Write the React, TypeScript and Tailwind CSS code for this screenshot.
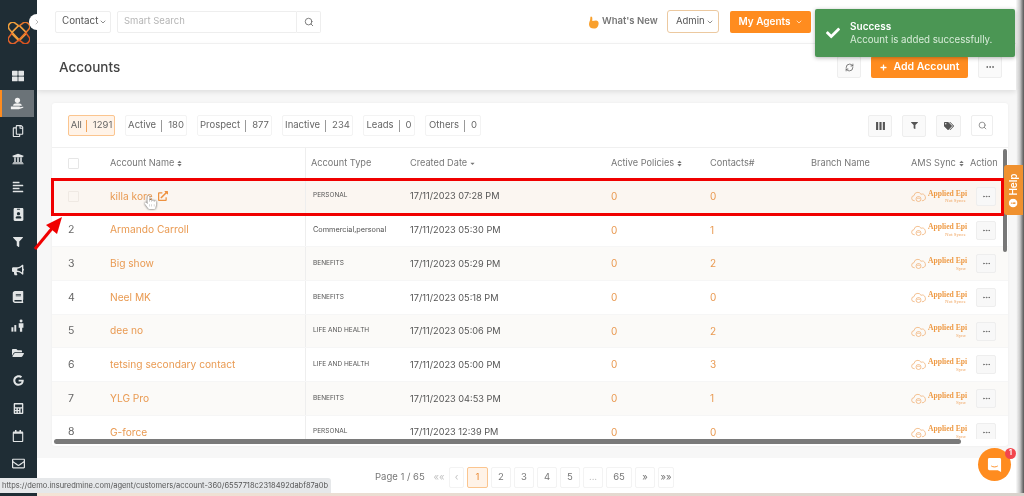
import React from "react";
import { FaThLarge, FaRegCopy, FaUniversity, FaAlignLeft, FaIdBadge, FaFilter, FaBullhorn, FaBook, FaFolderOpen, FaCalculator, FaRegCalendar, FaRegEnvelope, FaSort, FaCaretDown, FaTags, FaCheck, FaPlus, FaExternalLinkAlt, FaInfoCircle, FaHandPointer, FaGoogle } from "react-icons/fa";
import { ChevronDown, ChevronRight, Search, RefreshCw, MoreHorizontal } from "lucide-react";

const rows = [
  ["", "killa kore", "PERSONAL", "17/11/2023 07:28 PM", "0", "Not Synce"],
  ["2", "Armando Carroll", "Commercial,personal", "17/11/2023 05:30 PM", "1", "Not Synce"],
  ["3", "Big show", "BENEFITS", "17/11/2023 05:29 PM", "2", "Sync"],
  ["4", "Neel MK", "BENEFITS", "17/11/2023 05:18 PM", "0", "Not Synce"],
  ["5", "dee no", "LIFE AND HEALTH", "17/11/2023 05:06 PM", "2", "Sync"],
  ["6", "tetsing secondary contact", "LIFE AND HEALTH", "17/11/2023 05:00 PM", "3", "Sync"],
  ["7", "YLG Pro", "BENEFITS", "17/11/2023 04:53 PM", "1", "Sync"],
  ["8", "G-force", "PERSONAL", "17/11/2023 12:39 PM", "0", "Sync"],
];

const tabs = [
  ["Active", "180", "w-[62px]"],
  ["Prospect", "877", "w-[75px]"],
  ["Inactive", "234", "w-[71px]"],
  ["Leads", "0", "w-[52px]"],
  ["Others", "0", "w-[56px]"],
];

const pages = [
  ["««", "w-[14px] text-[#c4c4c4] border-transparent"],
  ["‹", "w-[15px] text-[#c4c4c4]"],
  ["1", "w-[21px] bg-[#fff3e8] border-[#fbc58f] text-[#e98a35]"],
  ["2", "w-[20px]"],
  ["3", "w-[20px]"],
  ["4", "w-[20px]"],
  ["5", "w-[20px]"],
  ["...", "w-[20px] text-[#c4c4c4]"],
  ["65", "w-[26px]"],
  ["»", "w-[20px]"],
  ["»»", "w-[16px]"],
];

const HandUser = () => (
  <svg viewBox="0 0 16 14" className="w-[14px] h-[13px]" fill="#f2f2f2">
    <circle cx="8.500" cy="3.400" r="3" />
    <path d="M3.500 9.500c0-1.800 2.200-2.700 5-2.700s5 .9 5 2.700z" />
    <path d="M1 10.300h9.500c.8 0 1 .6.7 1l3.400-.6c.8 0 .9.8.3 1.100L10 13.600H1z" />
  </svg>
);

const ChartPeople = () => (
  <svg viewBox="0 0 16 14" className="w-[14px] h-[13px]" fill="#e2e5e6">
    <rect x="0.500" y="9" width="2.200" height="5" />
    <rect x="3.800" y="6.500" width="2.200" height="7.500" />
    <circle cx="11.500" cy="1.800" r="1.700" />
    <path d="M8.800 4.400h5.400v5.200h-1.400V14h-2.600V9.600H8.800z" />
  </svg>
);

const Logo = () => (
  <svg viewBox="0 0 24 24" className="w-[22px] h-[22px]" fill="none" strokeWidth="1.700">
    <rect x="6" y="6" width="12" height="12" rx="1" transform="rotate(45 12 12)" stroke="#f3a13f" />
    <path d="M12 4.500 8.500 1.800a4.700 4.700 0 0 0-6.700 6.700L12 19.500" stroke="#f0a03c" />
    <path d="M12 4.500l3.500-2.700a4.700 4.700 0 0 1 6.700 6.700L12 19.500" stroke="#e8762c" />
    <path d="M4.500 12l-2.700 3.500a4.700 4.700 0 0 0 6.700 6.700L12 19.500" stroke="#e2622a" />
    <path d="M19.500 12l2.700 3.500a4.700 4.700 0 0 1-6.700 6.700L12 19.500" stroke="#d9541f" />
  </svg>
);

const SyncCloud = () => (
  <svg viewBox="0 0 18 15" className="w-[15px] h-[13px] shrink-0" fill="none" stroke="#f2b67e" strokeWidth="1">
    <path d="M4.500 12.500H4a3 3 0 0 1-.4-6A4.500 4.500 0 0 1 12 4.800a3.800 3.800 0 0 1 2.400 7.700H13" />
    <circle cx="9" cy="10.500" r="3" />
    <path d="M7.500 10.500a1.600 1.600 0 0 1 3 0" />
  </svg>
);

const Bars = () => (
  <svg viewBox="0 0 10 9" className="w-[9px] h-[8px]" fill="#555"><rect x="0" y="0" width="2.400" height="9" /><rect x="3.800" y="0" width="2.400" height="9" /><rect x="7.600" y="0" width="2.400" height="9" /></svg>
);

const sideIcons = [
  <FaThLarge size={12} />, <HandUser />, <FaRegCopy size={12} />, <FaUniversity size={12} />, <FaAlignLeft size={12} />,
  <FaIdBadge size={13} />, <FaFilter size={10} />, <FaBullhorn size={12} />, <FaBook size={12} />, <ChartPeople />,
  <FaFolderOpen size={12} />, <FaGoogle size={11} />, <FaCalculator size={11} />, <FaRegCalendar size={12} />, <FaRegEnvelope size={13} />,
];

const Sort = () => <FaSort className="inline ml-[2px] text-[#777]" size={7} />;

const IconBtn = ({ w, children, cls = "" }: { w: string; children: React.ReactNode; cls?: string }) => (
  <div className={`${w} h-[22px] flex items-center justify-center border border-[#eeeeee] bg-[#fafafa] rounded-[2px] text-[#555] ${cls}`}>{children}</div>
);

export default function App() {
  return (
    <div className="relative w-[1024px] h-[496px] overflow-hidden flex bg-white text-[#666] blur-[0.5px]" style={{ fontFamily: "Inter, 'Noto Sans', sans-serif" }}>
      <aside className="w-[37px] h-full bg-[#1f2d35] flex flex-col shrink-0">
        <div className="h-[62px] flex items-end justify-center pb-[18px]"><Logo /></div>
        {sideIcons.map((ic, i) => (
          <div key={i} className={`h-[27.7px] flex items-center justify-center text-[#e2e5e6] ${i === 1 ? "bg-[#6b7378] border-l-2 border-[#ff8c1f] pr-[2px] w-[34px]" : "pr-[1px]"}`}>{ic}</div>
        ))}
      </aside>

      <div className="flex-1 flex flex-col min-w-0">
        <div className="flex w-full h-[493px]">
          <main className="w-[979px] flex flex-col shrink-0 bg-[#f7f7f7]">
            {/* top bar */}
            <header className="h-[44px] bg-white border-b border-[#f4f4f4] flex items-center pl-[18px]">
              <div className="w-[56px] h-[22px] border border-[#eeeeee] rounded-[2px] flex items-center justify-between pl-[6px] pr-[3px] text-[9.8px] text-[#555]">Contact<ChevronDown size={8} className="shrink-0" /></div>
              <div className="ml-[6px] w-[180px] h-[22px] border border-[#eeeeee] rounded-l-[2px] flex items-center px-[6px] text-[9.5px] text-[#b5b5b5]">Smart Search</div>
              <div className="w-[24px] h-[22px] border border-l-0 border-[#eeeeee] rounded-r-[2px] flex items-center justify-center text-[#666]"><Search size={10} /></div>
              <svg viewBox="0 0 12 14" className="ml-[267px] w-[12px] h-[14px] shrink-0" fill="#f9a02c"><path d="M3 1.500c.9 0 1.300.8 1.300 1.600V6l3.700-.4c1.500 0 2.600.9 2.600 2.600 0 3-1.500 5.300-4.600 5.300-3.300 0-5-1.600-5-4.300C1 7 2.300 5.500 2.300 3.500c0-1 .1-2 .7-2z"/></svg>
              <span className="ml-[2px] w-[57px] text-[9.5px] font-semibold text-[#777] whitespace-nowrap">What's New</span>
              <div className="ml-[8px] w-[52px] h-[23px] border border-[#ecc9a0] rounded-[3px] flex items-center justify-between pl-[8px] pr-[4px] text-[9.5px] text-[#555]">Admin<ChevronDown size={8} className="shrink-0" /></div>
              <div className="ml-[11px] w-[81px] h-[22px] bg-[#ff8c1f] rounded-[2px] flex items-center justify-center gap-[4px] text-[10px] font-semibold text-white">My Agents<ChevronDown size={8} /></div>
            </header>

            {/* page header */}
            <section className="h-[46px] bg-white shadow-[0_2px_5px_rgba(0,0,0,0.10)] flex items-center pl-[22px] z-10">
              <h1 className="text-[13.5px] font-medium text-[#444]">Accounts</h1>
              <div className="ml-auto flex items-center pr-[14px]">
                <IconBtn w="w-[24px]"><RefreshCw size={9} /></IconBtn>
                <div className="ml-[10px] w-[97px] h-[22px] bg-[#ff8c1f] rounded-[2px] flex items-center justify-center gap-[7px] text-[10.5px] font-semibold text-white"><FaPlus size={7} />Add Account</div>
                <IconBtn w="w-[24px]" cls="ml-[10px]"><MoreHorizontal size={10} /></IconBtn>
              </div>
            </section>

            {/* card */}
            <section className="mt-[13px] ml-[15px] w-[956px] h-[343px] bg-white rounded-[3px] shadow-[0_0_3px_rgba(0,0,0,0.05)] flex flex-col relative overflow-hidden">
              <div className="h-[45px] shrink-0 flex items-center pl-[16px] pt-[1px] border-b border-[#f0f0f0]">
                <div className="w-[47px] h-[21px] bg-[#fff3e8] border border-[#fbc58f] rounded-[2px] flex items-center justify-center gap-[4px] text-[9.5px] text-[#666]">All<span className="w-px h-[12px] bg-[#f3a55c]" /><span className="ml-[2px]">1291</span></div>
                {tabs.map(([a, b, w]) => (
                  <div key={a} className={`${w} ml-[10px] h-[21px] border border-[#f3f3f3] rounded-[2px] flex items-center justify-center gap-[5px] text-[9.5px] text-[#666]`}>{a}<span className="w-px h-[12px] bg-[#999]" /><span className="ml-[1px]">{b}</span></div>
                ))}
                <div className="ml-auto flex items-center gap-[10px] pr-[15px]">
                  <IconBtn w="w-[24px]"><Bars /></IconBtn>
                  <IconBtn w="w-[24px]"><FaFilter size={7} /></IconBtn>
                  <IconBtn w="w-[25px]"><FaTags size={10} /></IconBtn>
                  <div className="w-[22px] h-[21px] border border-[#eeeeee] rounded-[2px] flex items-center justify-center text-[#777]"><Search size={9} /></div>
                </div>
              </div>

              <div className="h-[31px] shrink-0 grid grid-cols-[58px_195px_105px_201px_99px_101px_100px_65px_32px] items-center text-[9.2px] text-[#777] border-b border-[#f0f0f0]">
                <div className="pl-[16px]"><div className="w-[11px] h-[11px] border border-[#e6e6e6] rounded-[1px]" /></div>
                <div>Account Name<Sort /></div>
                <div className="h-full flex items-center pl-[5px] border-l border-[#eeeeee]">Account Type</div>
                <div>Created Date<FaCaretDown className="inline ml-[2px]" size={7} /></div>
                <div>Active Policies<Sort /></div>
                <div>Contacts#</div>
                <div>Branch Name</div>
                <div>AMS Sync<Sort /></div>
                <div className="-ml-[6px]">Action</div>
              </div>

              <div className="h-[260px] overflow-hidden pt-[1px]">
                {rows.map((r, i) => (
                  <div key={i} className={`h-[33.7px] grid grid-cols-[58px_195px_105px_201px_99px_101px_100px_65px_32px] items-center border-b border-[#f6f6f6] ${i === 0 ? "bg-[#fbf6f1]" : i % 2 === 0 ? "bg-[#fbfaf8]" : "bg-white"}`}>
                    <div className="pl-[16px] text-[10.5px] text-[#666]">{r[0] || <div className="w-[11px] h-[11px] border border-[#efe9e3] rounded-[1px]" />}</div>
                    <div className="flex items-center gap-[5px] text-[10.2px] text-[#e99a52]">{r[1]}{i === 0 && <FaExternalLinkAlt size={10} className="text-[#ee9240]" />}</div>
                    <div className={`h-full flex items-center pl-[7px] border-l border-[#eeeeee] text-[#555] ${i === 1 ? "text-[7.3px]" : "text-[6.5px]"}`}>{r[2]}</div>
                    <div className="text-[9.2px] text-[#555]">{r[3]}</div>
                    <div className="text-[10px] text-[#e99a52]">0</div>
                    <div className="text-[10px] text-[#e99a52]">{r[4]}</div>
                    <div />
                    <div className="flex items-center gap-[2px]">
                      <SyncCloud />
                      <div className="w-[38px] text-right leading-none" style={{ fontFamily: "'Liberation Serif', serif" }}>
                        <div className="text-[7.6px] font-bold text-[#ee9a45] whitespace-nowrap">Applied Epi</div>
                        <div className="text-[5px] text-[#f0a560] mt-[1px]">{r[5]}</div>
                      </div>
                    </div>
                    <div><div className="w-[20px] h-[19px] bg-[#f8f8f8] border border-[#eeeeee] rounded-[2px] flex items-center justify-center text-[#666]"><MoreHorizontal size={9} /></div></div>
                  </div>
                ))}
              </div>

              <div className="h-[5px] w-[907px] ml-[2px] bg-[#7a7a7a] rounded-full shrink-0" />
            </section>

            {/* pagination */}
            <footer className="mt-auto h-[35px] bg-white flex items-center pl-[338px] pt-[3px] text-[9.5px] text-[#777]">
              <span className="w-[57px] shrink-0">Page 1 / 65</span>
              <div className="flex items-center gap-[3px]">
                {pages.map(([p, c], i) => (
                  <div key={i} className={`h-[21px] flex items-center justify-center border border-[#f3f3f3] rounded-[2px] ${c}`}>{p}</div>
                ))}
              </div>
            </footer>
          </main>
          <div className="flex-1 bg-gradient-to-r from-[#fafafa] via-[#c9c9c9] to-[#555]" />
        </div>
        <div className="h-[3px] bg-gradient-to-r from-[#f4e4d6] to-[#d8d2cc]" />
      </div>

      {/* overlays */}
      <div className="absolute z-20 left-[29px] top-[14px] w-[16px] h-[16px] rounded-full bg-white flex items-center justify-center text-[#999]"><ChevronRight size={8} /></div>

      <div className="absolute z-20 left-[815px] top-[9px] w-[200px] h-[48px] bg-[#4b9654] rounded-[2px] shadow-[0_1px_4px_rgba(0,0,0,0.3)] flex items-center text-white">
        <FaCheck size={14} className="ml-[11px] shrink-0" />
        <div className="ml-[10px] leading-[14px]">
          <div className="text-[10px] font-semibold">Success</div>
          <div className="text-[9.7px] text-[#d8ecd9] whitespace-nowrap">Account is added successfully.</div>
        </div>
      </div>

      <div className="absolute z-20 left-[1003px] top-[149px] w-[4px] h-[103px] bg-[#777] rounded-full" />

      <div className="absolute z-20 left-[1004px] top-[165px] w-[19px] h-[50px] bg-[#f0912f] rounded-l-[3px] flex items-center justify-center text-white">
        <div className="flex items-center gap-[3px] -rotate-90 text-[10px] font-semibold whitespace-nowrap"><FaInfoCircle size={9} />Help</div>
      </div>

      <div className="absolute z-20 left-[51px] top-[178px] w-[953px] h-[38px] border-[3px] border-[#f00000]" />
      <svg className="absolute z-20 left-[32px] top-[214px]" width="34" height="38" viewBox="0 0 34 38" fill="#f00000">
        <path d="M3 35 L22 12" stroke="#f00000" strokeWidth="3" />
        <path d="M30 3 L25 20 L14 11 Z" />
      </svg>

      <FaHandPointer size={13} className="absolute z-20 left-[144px] top-[196px] text-white drop-shadow-[0_0_1px_#333]" />

      <div className="absolute z-20 left-[978px] top-[448px] w-[33px] h-[33px] rounded-full bg-[#ff8c1f] flex items-center justify-center">
        <svg viewBox="0 0 16 17" className="w-[15px] h-[16px]"><path d="M1 2.500A1.500 1.500 0 0 1 2.500 1h11A1.500 1.500 0 0 1 15 2.500V16l-3.500-2H2.500A1.500 1.500 0 0 1 1 12.500z" fill="#fff"/><path d="M4.500 9.500c2 1.400 5 1.400 7 0" stroke="#ff8c1f" strokeWidth="1" fill="none"/></svg>
      </div>
      <div className="absolute z-20 left-[1005px] top-[448px] w-[11px] h-[11px] rounded-full bg-[#f2454d] flex items-center justify-center text-[7px] font-bold text-white">1</div>

      <div className="absolute z-20 left-0 top-[478px] w-[331px] h-[15px] bg-[#e6e8ea] rounded-tr-[3px] flex items-center pl-[2px] text-[7.5px] text-[#555] whitespace-nowrap">https://demo.insuredmine.com/agent/customers/account-360/6557718c2318492dabf87a0b</div>
    </div>
  );
}
